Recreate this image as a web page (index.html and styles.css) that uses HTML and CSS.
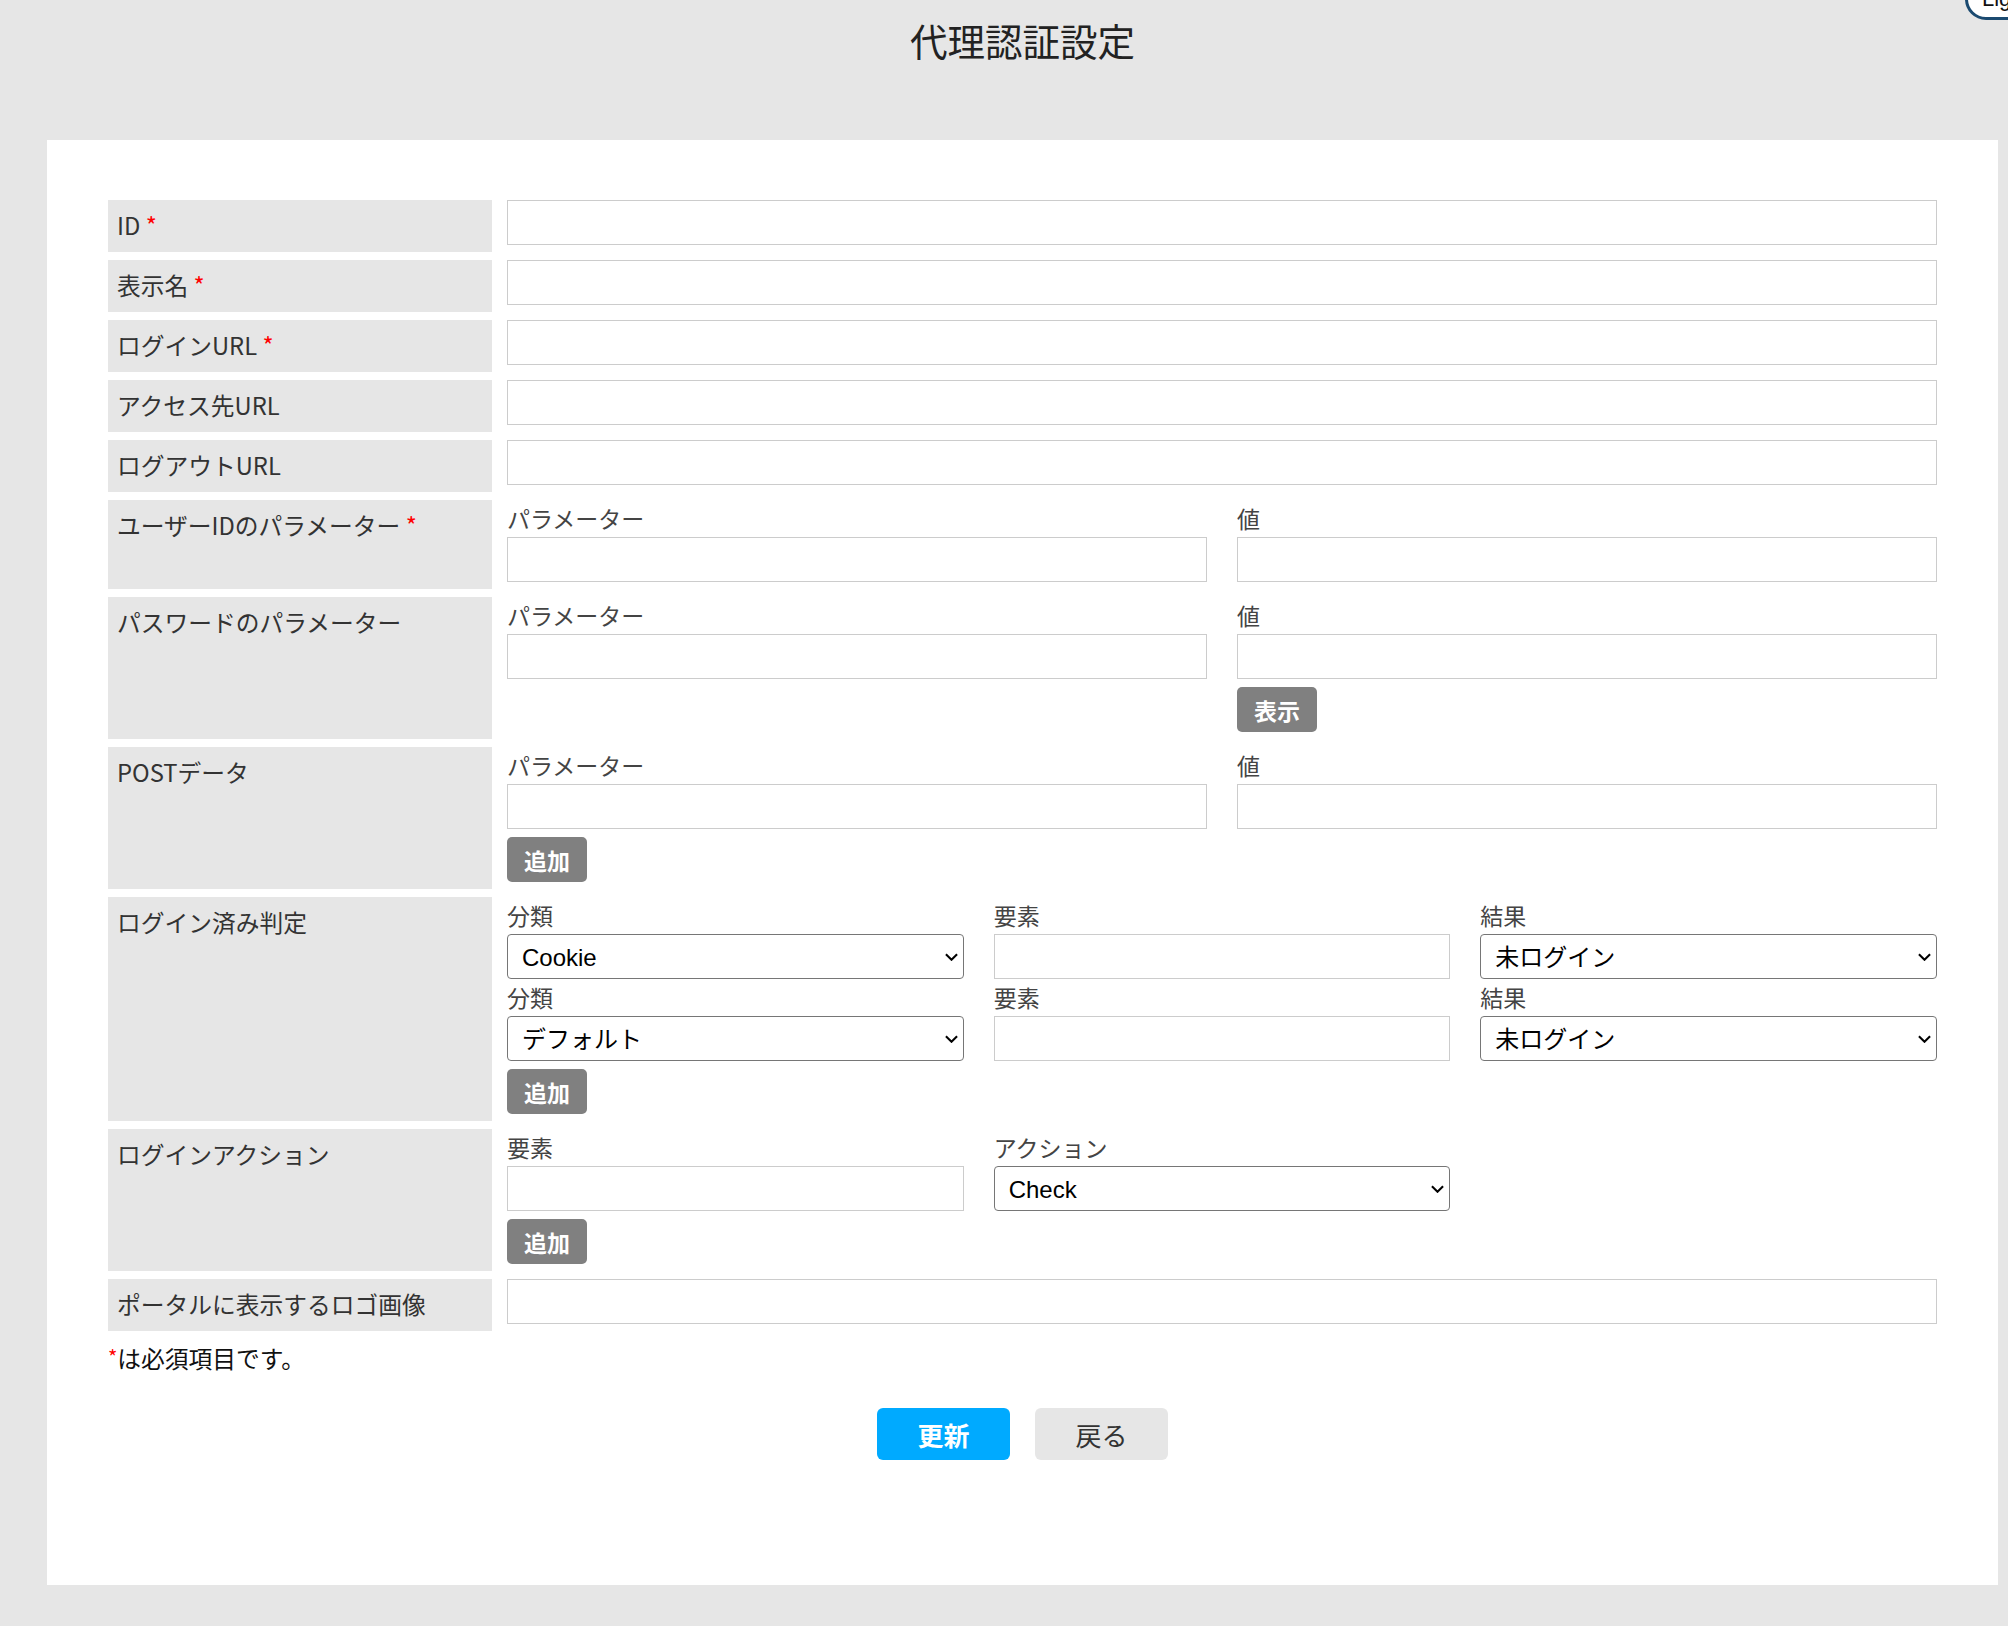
FILE: index.html
```html
<!DOCTYPE html>
<html lang="ja">
  <head>
    <meta charset="UTF-8" />
    <meta name="viewport" content="width=device-width, initial-scale=1.0" />
    <title>代理認証設定</title>
    <link rel="stylesheet" href="styles.css">
  </head>
  <body>

    <button class="theme-btn">Light</button>

    <div class="page">
      <h1 class="title">代理認証設定</h1>

      <div class="panel">
        <form class="setting-form">

          <div class="row">
            <div class="row-label">ID <span class="req">*</span></div>
            <div class="field"><input type="text" class="text-input" /></div>
          </div>

          <div class="row">
            <div class="row-label">表示名 <span class="req">*</span></div>
            <div class="field"><input type="text" class="text-input" /></div>
          </div>

          <div class="row">
            <div class="row-label">ログインURL <span class="req">*</span></div>
            <div class="field"><input type="text" class="text-input" /></div>
          </div>

          <div class="row">
            <div class="row-label">アクセス先URL</div>
            <div class="field"><input type="text" class="text-input" /></div>
          </div>

          <div class="row">
            <div class="row-label">ログアウトURL</div>
            <div class="field"><input type="text" class="text-input" /></div>
          </div>

          <div class="row">
            <div class="row-label">ユーザーIDのパラメーター <span class="req">*</span></div>
            <div class="field">
              <div class="cols cols-2">
                <div>
                  <div class="sub-label">パラメーター</div>
                  <input type="text" class="text-input" />
                </div>
                <div>
                  <div class="sub-label">値</div>
                  <input type="text" class="text-input" />
                </div>
              </div>
            </div>
          </div>

          <div class="row">
            <div class="row-label">パスワードのパラメーター</div>
            <div class="field">
              <div class="cols cols-2">
                <div>
                  <div class="sub-label">パラメーター</div>
                  <input type="text" class="text-input" />
                </div>
                <div>
                  <div class="sub-label">値</div>
                  <input type="password" class="text-input" />
                  <button type="button" class="btn-small">表示</button>
                </div>
              </div>
            </div>
          </div>

          <div class="row">
            <div class="row-label">POSTデータ</div>
            <div class="field">
              <div class="cols cols-2">
                <div>
                  <div class="sub-label">パラメーター</div>
                  <input type="text" class="text-input" />
                </div>
                <div>
                  <div class="sub-label">値</div>
                  <input type="text" class="text-input" />
                </div>
              </div>
              <button type="button" class="btn-small">追加</button>
            </div>
          </div>

          <div class="row">
            <div class="row-label">ログイン済み判定</div>
            <div class="field">
              <div class="cols cols-3">
                <div>
                  <div class="sub-label">分類</div>
                  <div class="select-wrap">
                    <select class="select-input"><option>Cookie</option></select>
                    <svg class="chevron" viewBox="0 0 14 8"><path d="M1 1l6 6 6-6" /></svg>
                  </div>
                </div>
                <div>
                  <div class="sub-label">要素</div>
                  <input type="text" class="text-input" />
                </div>
                <div>
                  <div class="sub-label">結果</div>
                  <div class="select-wrap">
                    <select class="select-input"><option>未ログイン</option></select>
                    <svg class="chevron" viewBox="0 0 14 8"><path d="M1 1l6 6 6-6" /></svg>
                  </div>
                </div>
                <div>
                  <div class="sub-label">分類</div>
                  <div class="select-wrap">
                    <select class="select-input"><option>デフォルト</option></select>
                    <svg class="chevron" viewBox="0 0 14 8"><path d="M1 1l6 6 6-6" /></svg>
                  </div>
                </div>
                <div>
                  <div class="sub-label">要素</div>
                  <input type="text" class="text-input" />
                </div>
                <div>
                  <div class="sub-label">結果</div>
                  <div class="select-wrap">
                    <select class="select-input"><option>未ログイン</option></select>
                    <svg class="chevron" viewBox="0 0 14 8"><path d="M1 1l6 6 6-6" /></svg>
                  </div>
                </div>
              </div>
              <button type="button" class="btn-small">追加</button>
            </div>
          </div>

          <div class="row">
            <div class="row-label">ログインアクション</div>
            <div class="field">
              <div class="cols cols-3">
                <div>
                  <div class="sub-label">要素</div>
                  <input type="text" class="text-input" />
                </div>
                <div>
                  <div class="sub-label">アクション</div>
                  <div class="select-wrap">
                    <select class="select-input"><option>Check</option></select>
                    <svg class="chevron" viewBox="0 0 14 8"><path d="M1 1l6 6 6-6" /></svg>
                  </div>
                </div>
              </div>
              <button type="button" class="btn-small">追加</button>
            </div>
          </div>

          <div class="row">
            <div class="row-label">ポータルに表示するロゴ画像</div>
            <div class="field"><input type="text" class="text-input" /></div>
          </div>

          <p class="note"><span class="req">*</span>は必須項目です。</p>

          <div class="actions">
            <button type="submit" class="btn btn-primary">更新</button>
            <button type="button" class="btn btn-back">戻る</button>
          </div>
        </form>
      </div>
    </div>

  </body>
</html>
```

FILE: styles.css
```css
* {
  box-sizing: border-box;
}

html,
body {
  margin: 0;
  height: 1626px;
  overflow: hidden;
}

body {
  font-family: "Noto Sans CJK JP", "Noto Sans", sans-serif;
  background-color: #e6e6e6;
  color: #333;
  position: relative;
}

.theme-btn {
  position: absolute;
  top: -22px;
  left: 1965px;
  height: 42px;
  width: 120px;
  padding: 0 0 0 14px;
  border: 3px solid #1b4a70;
  border-radius: 21px;
  background: #fff;
  color: #111;
  font-family: "Liberation Sans", sans-serif;
  font-size: 22px;
  line-height: 36px;
  text-align: left;
}

.page {
  padding: 0 10px 0 47px;
}

.title {
  margin: 0;
  height: 140px;
  padding-top: 15px;
  text-align: center;
  font-size: 37.5px;
  font-weight: normal;
  line-height: 50px;
  color: #222;
}

.panel {
  background: #fff;
  height: 1445px;
  padding: 60px 61px;
}

.row {
  display: flex;
  gap: 15px;
  margin-bottom: 8px;
}

.row-label {
  width: 384px;
  flex-shrink: 0;
  background-color: #e6e6e6;
  padding: 7px 9px;
  font-size: 23.75px;
  line-height: 36px;
  color: #333;
}

.req {
  color: #f00;
}

.field {
  flex: 1;
  padding-bottom: 7px;
}

.text-input {
  display: block;
  width: 100%;
  height: 45px;
  border: 1px solid #ccc;
  border-radius: 0;
  padding: 0 14px;
  font-size: 22px;
  background: #fff;
}

.cols {
  display: grid;
  column-gap: 30px;
}

.cols-2 {
  grid-template-columns: 1fr 1fr;
}

.cols-3 {
  grid-template-columns: 1fr 1fr 1fr;
}

.sub-label {
  font-size: 23px;
  line-height: 37px;
  color: #444;
}

.select-wrap {
  position: relative;
}

.select-input {
  display: block;
  width: 100%;
  height: 45px;
  appearance: none;
  border: 1px solid #767676;
  border-radius: 4px;
  background: #fff;
  padding: 2px 30px 0 14px;
  font-family: "Liberation Sans", "Noto Sans CJK JP", sans-serif;
  font-size: 24px;
  color: #000;
}

.chevron {
  position: absolute;
  right: 6px;
  top: 19px;
  width: 13px;
  height: 8px;
  fill: none;
  stroke: #000;
  stroke-width: 2.2;
  pointer-events: none;
}

.btn-small {
  display: block;
  width: 80px;
  height: 45px;
  margin-top: 8px;
  border: none;
  border-radius: 5px;
  background-color: #808080;
  color: #fff;
  font-family: "Noto Sans CJK JP", sans-serif;
  font-size: 23px;
  font-weight: bold;
  padding: 0;
}

.note {
  margin: 0;
  font-size: 23.75px;
  line-height: 36px;
  color: #111;
}

.note .req {
  font-size: 20px;
  vertical-align: 3px;
}

.actions {
  display: flex;
  justify-content: center;
  gap: 25px;
  margin-top: 32px;
}

.btn {
  width: 133px;
  height: 52px;
  border: none;
  border-radius: 6px;
  font-family: "Noto Sans CJK JP", sans-serif;
  font-size: 26px;
  padding: 0;
}

.btn-primary {
  background-color: #00aaff;
  color: #fff;
  font-weight: bold;
}

.btn-back {
  background-color: #e6e6e6;
  color: #333;
}
```
